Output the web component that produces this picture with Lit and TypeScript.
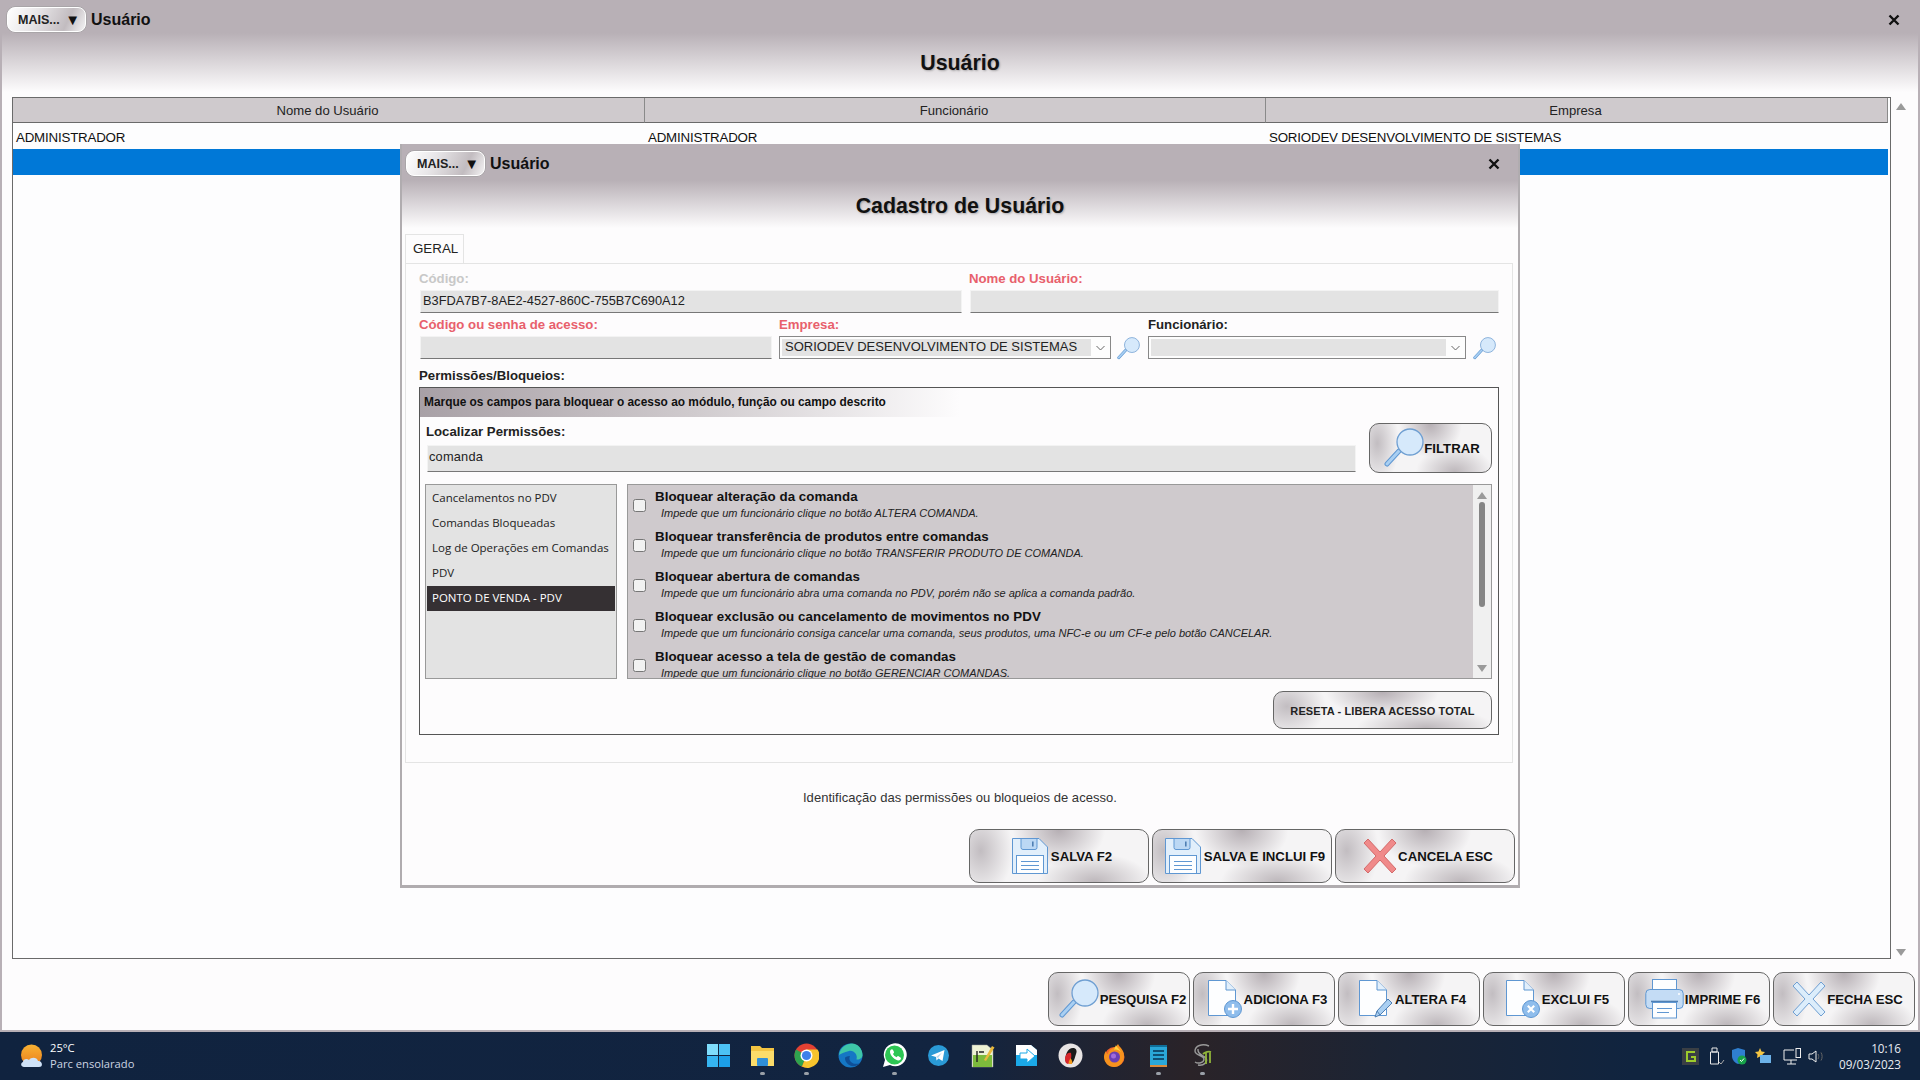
import { LitElement, html, css, svg } from "lit";
import { customElement } from "lit/decorators.js";

const B = "#5f97d2";
const L = "#d6e9fb";
const W = "#fdfeff";

const floppy = html`<svg class="ico" width="36" height="36" viewBox="0 0 36 36"><path d="M.5.5H27L35.5 9V35.5H.5Z" fill="#e2effb" stroke="${B}"/><path d="M9 .5H25V9.5a2 2 0 0 1-2 2H11a2 2 0 0 1-2-2Z" fill="#bcd8f4" stroke="${B}"/><rect x="20" y="3.5" width="1.6" height="5" fill="#4f7fb3"/><rect x="4.5" y="17.5" width="27" height="18" fill="${W}" stroke="${B}"/><path d="M9 23.5H27M9 27.5H27M9 31.5H27" stroke="${B}" fill="none"/></svg>`;

const mag = (s: number, h = s) => html`<svg class="ico" width="${s}" height="${h}" viewBox="0 0 40 40"><path d="M15 23 3 36" stroke="#5f97d2" stroke-width="5" stroke-linecap="round" fill="none"/><path d="M15 23 3 36" stroke="#a9cff2" stroke-width="3" stroke-linecap="round" fill="none"/><circle cx="26" cy="14" r="13" fill="${L}" stroke="#6f9fd2" stroke-width="1.3"/></svg>`;

const cross = (f: string, st: string, w = 34, h = 36) => html`<svg class="ico" width="${w}" height="${h}" viewBox="0 0 34 36"><path d="M5 1 17 14 29 1 33 5 21 18 33 31 29 35 17 22 5 35 1 31 13 18 1 5Z" fill="${f}" stroke="${st}"/></svg>`;

const doc = svg`<path d="M.5 1.5H18L27.5 11V36.5H.5Z" fill="${W}" stroke="${B}"/><path d="M18 1.5V11H27.5" fill="#e2effb" stroke="${B}"/>`;

const filePlus = html`<svg class="ico" width="35" height="40" viewBox="0 0 35 40">${doc}<circle cx="25" cy="30" r="8.5" fill="#8fbdec" stroke="${B}"/><path d="M25 25V35M20 30H30" stroke="#fff" stroke-width="2.4"/></svg>`;
const filePen = html`<svg class="ico" width="35" height="40" viewBox="0 0 35 40">${doc}<path d="M16 38 18 32 29 20 33 24 21 36Z" fill="#a9cff2" stroke="#4f7fb3"/><path d="M18 32 21 36" stroke="#4f7fb3"/></svg>`;
const fileX = html`<svg class="ico" width="35" height="40" viewBox="0 0 35 40">${doc}<circle cx="25" cy="30" r="8.5" fill="#8fbdec" stroke="${B}"/><path d="M21.8 26.8 28.2 33.2M28.2 26.8 21.8 33.2" stroke="#fff" stroke-width="2.2"/></svg>`;
const printer = html`<svg class="ico" width="39" height="40" viewBox="0 0 39 40"><rect x="7.5" y=".5" width="24" height="20" fill="${W}" stroke="${B}"/><rect x=".8" y="10.5" width="37.4" height="19" rx="4" fill="#c4dcf5" stroke="${B}"/><path d="M6 22.5H33" stroke="#4f7fb3" stroke-width="1.6"/><rect x="7.5" y="23.5" width="24" height="15.5" fill="${W}" stroke="${B}"/><path d="M12 29.5H27M12 33.5H24" stroke="${B}"/><circle cx="34" cy="15" r="1" fill="#fff"/></svg>`;

const chev = html`<svg width="9" height="6" viewBox="0 0 9 6"><path d="M.5 1 4.5 5 8.5 1" fill="none" stroke="#666"/></svg>`;
const closeX = html`<svg class="close" width="12" height="12" viewBox="0 0 12 12"><path d="M1.5 1.5 10.5 10.5M10.5 1.5 1.5 10.5" stroke="#111" stroke-width="2.4"/></svg>`;

const perms: [string, string][] = [
  ["Bloquear alteração da comanda", "Impede que um funcionário clique no botão ALTERA COMANDA."],
  ["Bloquear transferência de produtos entre comandas", "Impede que um funcionário clique no botão TRANSFERIR PRODUTO DE COMANDA."],
  ["Bloquear abertura de comandas", "Impede que um funcionário abra uma comanda no PDV, porém não se aplica a comanda padrão."],
  ["Bloquear exclusão ou cancelamento de movimentos no PDV", "Impede que um funcionário consiga cancelar uma comanda, seus produtos, uma NFC-e ou um CF-e pelo botão CANCELAR."],
  ["Bloquear acesso a tela de gestão de comandas", "Impede que um funcionário clique no botão GERENCIAR COMANDAS."],
];
const modules = ["Cancelamentos no PDV", "Comandas Bloqueadas", "Log de Operações em Comandas", "PDV", "PONTO DE VENDA - PDV"];

const tb = (inner: unknown, dot = false) => ({ inner, dot });
const apps = [
  tb(svg`<rect x="1" y="1" width="11" height="11" fill="#7fdcfb"/><rect x="13" y="1" width="11" height="11" fill="#4cc2f5"/><rect x="1" y="13" width="11" height="11" fill="#35b4f0"/><rect x="13" y="13" width="11" height="11" fill="#1c9fe8"/>`),
  tb(svg`<path d="M1 3h9l2 2h12v18H1Z" fill="#f4c542"/><path d="M1 8h23v15H1Z" fill="#fbdc6a"/><rect x="7" y="15" width="11" height="8" rx="1" fill="#2f8fd8"/>`, true),
  tb(svg`<circle cx="12.5" cy="12.5" r="12" fill="#e34133"/><path d="M12.5 12.5 2.1 6.5A12 12 0 0 0 8 23.6Z" fill="#2ea44f"/><path d="M12.5 6.5H23.6A12 12 0 0 1 8 23.6L12.5 12.5Z" fill="#f7c42d"/><circle cx="12.5" cy="12.5" r="6" fill="#fff"/><circle cx="12.5" cy="12.5" r="4.6" fill="#3f80ea"/>`, true),
  tb(svg`<circle cx="12.5" cy="12.5" r="12" fill="#1577c4"/><path d="M1 12C2 4 9 .5 14 .5 20 .5 24.5 6 24.5 12c0 3-3 5-6 4.5C20 12 16 7 11 8 6 9 3 11 1 12Z" fill="#3ec6a8"/><path d="M7 15c0 5 5 9 10 8 2-.5 4-1.5 5-3-3 1.5-7 1-9-1-2-2-2-4-1-6-3 0-5 1-5 2Z" fill="#0f4f97"/>`),
  tb(svg`<path d="M1 24 3 17A11.5 11.5 0 1 1 8 22Z" fill="#fff"/><circle cx="12.5" cy="12" r="9.5" fill="#2dc653"/><path d="M8.5 7c1-1 2-1 2.5 0l1 2c.3.7-.6 1.3-1 2 .8 1.5 2 2.5 3.5 3.2.7-.4 1.3-1.4 2-1l2 1.2c.8.5.5 1.8-.5 2.6-3 2-10-4-10-8 0-.7.2-1.500.5-2Z" fill="#fff"/>`, true),
  tb(svg`<circle cx="12.5" cy="12.5" r="10.5" fill="#2a9ad6"/><path d="M5 12.5 18.5 7 16.5 18 12.5 15.5 10.5 17.5 10 14Z" fill="#fff"/><path d="M10 14 16 9.5 12 15Z" fill="#b5d9ef"/>`),
  tb(svg`<path d="M2 2H17L23 7V24H2Z" fill="#eef2d5" stroke="#999" stroke-width=".5"/><path d="M3 12H22V24H3Z" fill="#7dbb3c"/><path d="M7 8V19M9 9H14" stroke="#222" stroke-width="1.4" fill="none"/><path d="M14 17 22 3 24.5 4.5 16 18Z" fill="#e9b93c"/>`),
  tb(svg`<path d="M2 2H17L23 7V23H2Z" fill="#1ba9e8"/><path d="M2 2H17L23 7V12H2Z" fill="#fff"/><path d="M6 10H13V6L21 13 13 20V16H6Z" fill="#fff" stroke="#1ba9e8"/>`),
  tb(svg`<circle cx="12.5" cy="12.5" r="12" fill="#e8e4e4"/><path d="M8 20C6 12 10 4 16 5c3 1 3 4 2 6-1 3-2 8-4 9Z" fill="#1a1a1a"/><path d="M7 16c0-4 3-7 6-6 1 5-1 10-3 11-2 0-3-3-3-5Z" fill="#d8262b"/><path d="M11 21c-1-3 1-4 1.5-6 1 2 2.5 3 1.5 6Z" fill="#f29a1d"/>`),
  tb(svg`<circle cx="12.5" cy="14" r="10" fill="#f0622c"/><path d="M16 1c1 3 6 5 6 12 0 6-4 11-10 11S2 19 2 14c0-2 .5-4 2-6 0 2 1 3 2 3 0-3 3-5 5-6 2-1 4-2 5-4Z" fill="#f7921e"/><path d="M14 2c0 2 4 4 5 7-2-2-5-3-7-2Z" fill="#ffd23f"/><circle cx="12.5" cy="14" r="5.5" fill="#6a3fb5"/><circle cx="11.5" cy="13" r="2.5" fill="#a06bdc"/>`),
  tb(svg`<rect x="4" y="2" width="17" height="20" fill="#2aa7d8"/><path d="M4 2H21V4H4Z" fill="#0f6f9a"/><path d="M4 22H21V24H4Z" fill="#d98a3a"/><path d="M7 8H18M7 12H18M7 16H18" stroke="#0f4f74" stroke-width="2"/>`, true),
  tb(svg`<path d="M19 3C12 0 5 3 5 8c0 5 9 4 9 8 0 4-6 5-9 3M8 6c-1 6 6 6 8 9 2 4-2 8-8 7" fill="none" stroke="#999" stroke-width="1.4"/><path d="M13 11c2-2 6-3 8-2M16 9v12M20 9v11" fill="none" stroke="#8fb339" stroke-width="1.8"/>`, true),
];

const sun = html`<svg class="wx" width="25" height="25" viewBox="0 0 25 25"><defs><linearGradient id="s" x1="0" y1="0" x2="0" y2="1"><stop offset="0" stop-color="#f9b233"/><stop offset="1" stop-color="#ea7f1d"/></linearGradient></defs><circle cx="11.5" cy="11" r="10.5" fill="url(#s)"/><path d="M4 23c-3 0-4-4-1-5 0-3 4-4 6-2 2-3 8-3 9 1 4-1 6 6 1 6Z" fill="#cfe2f7"/></svg>`;

@customElement("app-root")
export class AppRoot extends LitElement {
  static styles = css`
    :host { display: block; width: 1920px; height: 1080px; overflow: hidden; font-family: "Liberation Sans", Arial, sans-serif; color: #111; background: #fdfcfd; }
    * { box-sizing: border-box; }
    .screen { display: flex; flex-direction: column; height: 1080px; }
    .win { height: 1032px; position: relative; display: flex; flex-direction: column; border-left: 2px solid #b8b0b6; border-right: 2px solid #b8b0b6; border-bottom: 2px solid #b8b0b6; background: #fdfcfd; }
    .head { height: 97px; flex: none; background: linear-gradient(#b8b0b6 0, #b8b0b6 33px, #fdfcfd 92px); }
    .bar { display: flex; align-items: center; height: 25px; margin-top: 7px; padding-left: 5px; }
    .more { width: 79px; height: 25px; border: 1px solid #fff; border-radius: 8px; background: linear-gradient(115deg, #fff 0%, #e8e6e8 35%, #c2bcc0 75%, #f4f3f4 100%); display: flex; align-items: center; justify-content: space-between; padding: 0 5px 0 10px; font-size: 12.5px; font-weight: 700; color: #222; box-shadow: 0 0 0 .5px #999; margin-right: 5px; }
    .more i { font-style: normal; font-size: 15px; color: #111; }
    .wtitle { font-size: 16px; font-weight: 700; }
    .close { margin-left: auto; margin-right: 18px; }
    h1 { margin: 0; font-size: 21.33px; font-weight: 700; line-height: 26px; text-align: center; text-shadow: 1px 1px 2px rgba(0,0,0,.25); }
    .head h1 { padding-top: 18px; }
    .body { flex: 1; display: flex; padding-left: 10px; min-height: 0; }
    .table { width: 1879px; border: 1px solid #6a6a6a; background: #fdfdfe; }
    .trow { display: grid; grid-template-columns: 632px 621px 622px; width: 1875px; }
    .th { height: 25px; background: #cfcacd; border-right: 1px solid #8a8a8a; border-bottom: 1px solid #6a6a6a; text-align: center; font-size: 13.1px; line-height: 25px; padding-right: 2px; color: #222; }
    .td { height: 26px; font-size: 13.33px; line-height: 29px; padding-left: 3px; letter-spacing: -.2px; color: #111; }
    .sel { background: #0078d7; height: 26px; }
    .vscroll { width: 20px; display: flex; flex-direction: column; justify-content: space-between; align-items: center; padding: 6px 0 3px; }
    .up, .down { width: 0; height: 0; border-left: 5px solid transparent; border-right: 5px solid transparent; }
    .up { border-bottom: 7px solid #9a9a9a; }
    .down { border-top: 7px solid #9a9a9a; }
    .foot { height: 71px; flex: none; display: flex; justify-content: flex-end; gap: 3px; padding: 13px 3px 0 0; }
    .btn { display: flex; align-items: center; justify-content: center; gap: 1px; border: 1px solid #666; border-radius: 10px; font-size: 13.2px; font-weight: 700; color: #111; white-space: nowrap;
      background:
        radial-gradient(ellipse 26% 70% at 50% 0%, #b6afb4 0%, rgba(182,175,180,0) 100%),
        radial-gradient(ellipse 32% 55% at 70% 100%, #bdb7bb 0%, rgba(189,183,187,0) 100%),
        radial-gradient(ellipse 18% 90% at 6% 40%, #c2bdc1 0%, rgba(194,189,193,0) 100%),
        #f5f4f5; }
    .foot .btn { width: 142px; height: 54px; padding-left: 7px; }
    .ico { flex: none; display: block; }

    .modal { position: absolute; left: 398px; top: 144px; width: 1120px; height: 744px; display: flex; flex-direction: column; background: #fdfcfd; border-left: 2px solid #b0acaf; border-right: 2px solid #b0acaf; border-bottom: 3px solid #b0acaf; }
    .mhead { height: 90px; flex: none; background: linear-gradient(#b8b0b6 0, #b8b0b6 36px, #fdfcfd 84px); }
    .mhead .bar { padding-left: 4px; }
    .mhead .close { margin-right: 18px; }
    .mhead h1 { padding-top: 17px; }
    .tab { width: 59px; height: 29px; margin-left: 3px; border: 1px solid #e4e4e4; border-bottom: 0; font-size: 13.33px; line-height: 28px; padding-left: 7px; color: #222; flex: none; }
    .panel { height: 500px; flex: none; margin: 0 5px 0 3px; border: 1px solid #e4e4e4; padding: 8px 0 0 13px; }
    .grid1 { display: grid; grid-template-columns: 543px 530px; gap: 7px; }
    .grid2 { display: flex; align-items: flex-end; margin-top: 5px; }
    .c-code { width: 353px; margin-right: 7px; }
    .c-emp { width: 332px; margin-right: 6px; }
    .c-fun { width: 318px; margin-right: 7px; }
    .c-mag { width: 23px; margin-right: 8px; }
    .c-mag svg { position: relative; top: 1px; }
    .lab { display: block; font-size: 13.2px; line-height: 14px; font-weight: 700; margin-bottom: 4px; color: #222; }
    .lab.dim { color: #c8c8c8; }
    .lab.req { color: #e8606c; }
    .fld { height: 23px; margin-left: 1px; background: #e3e3e3; border: 1px solid #f3f3f3; border-bottom: 1px solid #777; font-size: 12.8px; line-height: 19px; padding-left: 2px; color: #222; }
    .select { height: 23px; display: flex; align-items: center; border: 1px solid #888; background: #fdfdfd; padding: 2px 0 2px 2px; font-size: 13px; color: #222; }
    .select .v { flex: 1; height: 100%; background: #e3e3e3; padding-left: 3px; line-height: 15px; white-space: nowrap; overflow: hidden; }
    .select .c { width: 19px; flex: none; display: flex; justify-content: center; }
    .sec { font-size: 13.2px; line-height: 14px; font-weight: 700; margin: 10px 0 4px; color: #222; }
    .box { width: 1080px; height: 348px; border: 1px solid #555; padding-bottom: 5px; }
    .banner { height: 29px; background: linear-gradient(90deg, #a8a0a6 0, #cfcacd 50%, #fdfcfd 100%); width: 540px; font-size: 11.9px; font-weight: 700; line-height: 29px; padding-left: 4px; white-space: nowrap; color: #111; }
    .find { display: flex; justify-content: space-between; padding: 6px 6px 0 6px; }
    .find .lab { margin: 2px 0 6px; }
    .search { width: 929px; height: 27px; margin-left: 1px; background: #e3e3e3; border: 1px solid #f3f3f3; border-bottom: 1px solid #777; font-size: 12.8px; line-height: 22px; padding-left: 1px; letter-spacing: .2px; color: #222; }
    .filter { width: 123px; height: 50px; padding-left: 3px; gap: 0; }
    .lists { display: flex; gap: 10px; padding: 11px 0 0 5px; }
    .mods { width: 192px; height: 195px; background: #e3e3e3; border: 1px solid #999; padding: 1px; font-family: "Open Sans", sans-serif; font-size: 11.5px; color: #222; }
    .mod { height: 25px; line-height: 24px; padding-left: 5px; white-space: nowrap; }
    .mod.on { background: #353033; color: #fff; }
    .perms { width: 865px; height: 195px; border: 1px solid #999; background: #cfcacd; display: flex; overflow: hidden; }
    .pl { flex: 1; min-width: 0; }
    .pi { height: 40px; padding-top: 4px; display: flex; }
    .cb { width: 13px; height: 13px; flex: none; margin: 10px 9px 0 5px; border: 1px solid #777; border-radius: 2.5px; background: #f2f2f2; }
    .pt { font-size: 13.33px; line-height: 16px; font-weight: 700; white-space: nowrap; letter-spacing: .04px; color: #111; }
    .pd { font-size: 11px; line-height: 16px; font-style: italic; padding-left: 6px; white-space: nowrap; color: #222; }
    .sb { width: 18px; flex: none; background: #f0f0f0; display: flex; flex-direction: column; align-items: center; padding-top: 7px; }
    .sb .thumb { width: 6px; height: 105px; margin-top: 3px; background: #858585; border-radius: 3px; }
    .sb .down { margin-top: auto; margin-bottom: 6px; }
    .reset { width: 219px; height: 38px; margin: 12px 0 0 853px; border-radius: 10px; font-size: 11px; font-weight: 700; letter-spacing: .1px; color: #222; padding-top: 1px; }
    .hint { text-align: center; font-size: 13px; line-height: 20px; margin-top: 25px; letter-spacing: .05px; color: #333; }
    .mfoot { display: flex; justify-content: flex-end; gap: 3px; margin-top: 21px; padding-right: 3px; }
    .mfoot .btn { width: 180px; height: 54px; padding-left: 6px; gap: 3px; }
    .mfoot .btn:last-child { gap: 1px; }

    .task { height: 48px; flex: none; position: relative; display: flex; justify-content: center; align-items: center; background: linear-gradient(90deg, #10233f 0, #122440 50%, #2a2328 62%, #1c2434 72%, #10243f 85%); color: #fff; font-family: "Open Sans", sans-serif; }
    .weather { position: absolute; left: 20px; top: 0; height: 48px; display: flex; align-items: center; gap: 5px; font-size: 11.2px; line-height: 16px; }
    .weather .sub { color: #ccd5e2; }
    .apps { display: flex; }
    .app { width: 44px; height: 48px; display: flex; flex-direction: column; align-items: center; padding-top: 11px; position: relative; }
    .dot { position: absolute; top: 40px; width: 5px; height: 3px; border-radius: 2px; background: #9aa0a8; }
    .tray { position: absolute; left: 1682px; top: 0; height: 48px; width: 219px; display: flex; align-items: center; }
    .clock { margin-left: auto; text-align: right; font-size: 11.7px; line-height: 16px; color: #e8ecf2; }
    .tray svg { flex: none; display: block; }
    .t1 { margin-left: 10px; } .t2 { margin-left: 6px; } .t3 { margin-left: 8px; } .t4 { margin-left: 12px; }
  `;

  private btn(icon: unknown, label: string) {
    return html`<div class="btn">${icon}<span>${label}</span></div>`;
  }

  private bar(title: string) {
    return html`<div class="bar"><div class="more"><span>MAIS...</span><i>▼</i></div><span class="wtitle">${title}</span>${closeX}</div>`;
  }

  render() {
    return html`<div class="screen">
      <div class="win">
        <div class="head">${this.bar("Usuário")}<h1>Usuário</h1></div>
        <div class="body">
          <div class="table">
            <div class="trow"><div class="th">Nome do Usuário</div><div class="th">Funcionário</div><div class="th">Empresa</div></div>
            <div class="trow"><div class="td">ADMINISTRADOR</div><div class="td">ADMINISTRADOR</div><div class="td">SORIODEV DESENVOLVIMENTO DE SISTEMAS</div></div>
            <div class="trow sel"></div>
          </div>
          <div class="vscroll"><div class="up"></div><div class="down"></div></div>
        </div>
        <div class="foot">
          ${this.btn(mag(40), "PESQUISA F2")}
          ${this.btn(filePlus, "ADICIONA F3")}
          ${this.btn(filePen, "ALTERA F4")}
          ${this.btn(fileX, "EXCLUI F5")}
          ${this.btn(printer, "IMPRIME F6")}
          ${this.btn(cross("#dcedfb", "#6f9fd2"), "FECHA ESC")}
        </div>

        <div class="modal">
          <div class="mhead">${this.bar("Usuário")}<h1>Cadastro de Usuário</h1></div>
          <div class="tab">GERAL</div>
          <div class="panel">
            <div class="grid1">
              <div><span class="lab dim">Código:</span><div class="fld">B3FDA7B7-8AE2-4527-860C-755B7C690A12</div></div>
              <div><span class="lab req">Nome do Usuário:</span><div class="fld"></div></div>
            </div>
            <div class="grid2">
              <div class="c-code"><span class="lab req">Código ou senha de acesso:</span><div class="fld"></div></div>
              <div class="c-emp"><span class="lab req">Empresa:</span><div class="select"><div class="v">SORIODEV DESENVOLVIMENTO DE SISTEMAS</div><div class="c">${chev}</div></div></div>
              <div class="c-mag">${mag(23)}</div>
              <div class="c-fun"><span class="lab">Funcionário:</span><div class="select"><div class="v"></div><div class="c">${chev}</div></div></div>
              <div class="c-mag">${mag(23)}</div>
            </div>
            <div class="sec">Permissões/Bloqueios:</div>
            <div class="box">
              <div class="banner">Marque os campos para bloquear o acesso ao módulo, função ou campo descrito</div>
              <div class="find">
                <div><span class="lab">Localizar Permissões:</span><div class="search">comanda</div></div>
                <div class="btn filter">${mag(40)}<span>FILTRAR</span></div>
              </div>
              <div class="lists">
                <div class="mods">${modules.map((m, i) => html`<div class="mod ${i === 4 ? "on" : ""}">${m}</div>`)}</div>
                <div class="perms">
                  <div class="pl">${perms.map(([t, d]) => html`<div class="pi"><div class="cb"></div><div><div class="pt">${t}</div><div class="pd">${d}</div></div></div>`)}</div>
                  <div class="sb"><div class="up"></div><div class="thumb"></div><div class="down"></div></div>
                </div>
              </div>
              <div class="btn reset">RESETA - LIBERA ACESSO TOTAL</div>
            </div>
          </div>
          <div class="hint">Identificação das permissões ou bloqueios de acesso.</div>
          <div class="mfoot">
            ${this.btn(floppy, "SALVA F2")}
            ${this.btn(floppy, "SALVA E INCLUI F9")}
            ${this.btn(cross("#f08a8a", "#d46a6a"), "CANCELA ESC")}
          </div>
        </div>
      </div>

      <div class="task">
        <div class="weather">${sun}<div><div>25°C</div><div class="sub">Parc ensolarado</div></div></div>
        <div class="apps">${apps.map(a => html`<div class="app"><svg width="25" height="25" viewBox="0 0 25 25">${a.inner}</svg>${a.dot ? html`<div class="dot"></div>` : ""}</div>`)}</div>
        <div class="tray">
          <svg width="17" height="17" viewBox="0 0 17 17"><rect width="17" height="17" fill="#3a3f44"/><path d="M13 4H5V13H13V9H9" fill="none" stroke="#9ccb2c" stroke-width="2"/></svg>
          <svg class="t1" width="16" height="18" viewBox="0 0 16 18"><path d="M3 1H8V5H3ZM1.5 5H9.5V17H1.5Z" fill="none" stroke="#e8e8e8"/><path d="M10 15 12 17 15 13" fill="none" stroke="#aaa"/></svg>
          <svg class="t2" width="16" height="18" viewBox="0 0 16 18"><path d="M7 1 14 3V9C14 13 10 16 7 17 4 16 1 13 1 9V3Z" fill="#2f7fd0"/><circle cx="11" cy="13" r="4.5" fill="#17a34a"/><path d="M9 13 10.5 14.5 13 11.5" stroke="#fff" fill="none"/></svg>
          <svg class="t3" width="16" height="16" viewBox="0 0 16 16"><path d="M5 0 6.5 3.5 10 4 7.5 6.5 8 10 5 8.5 2 10 2.5 6.5 0 4 3.5 3.5Z" fill="#f4c542"/><rect x="5" y="7" width="11" height="8" fill="#6cb2e8"/></svg>
          <svg class="t4" width="19" height="17" viewBox="0 0 19 17"><path d="M11 2H1V12H14" fill="none" stroke="#eee"/><rect x="13" y=".5" width="4.5" height="9" fill="none" stroke="#eee"/><path d="M4 16H13M8 12V16" stroke="#eee"/></svg>
          <svg class="t2" width="17" height="15" viewBox="0 0 17 15"><path d="M1 5H4L8 2V13L4 10H1Z" fill="none" stroke="#eee"/><path d="M10 5C11 6.5 11 8.5 10 10M13 3.5C14.5 6 14.5 9 13 11.5" fill="none" stroke="#666"/></svg>
          <div class="clock"><div>10:16</div><div>09/03/2023</div></div>
        </div>
      </div>
    </div>`;
  }
}
